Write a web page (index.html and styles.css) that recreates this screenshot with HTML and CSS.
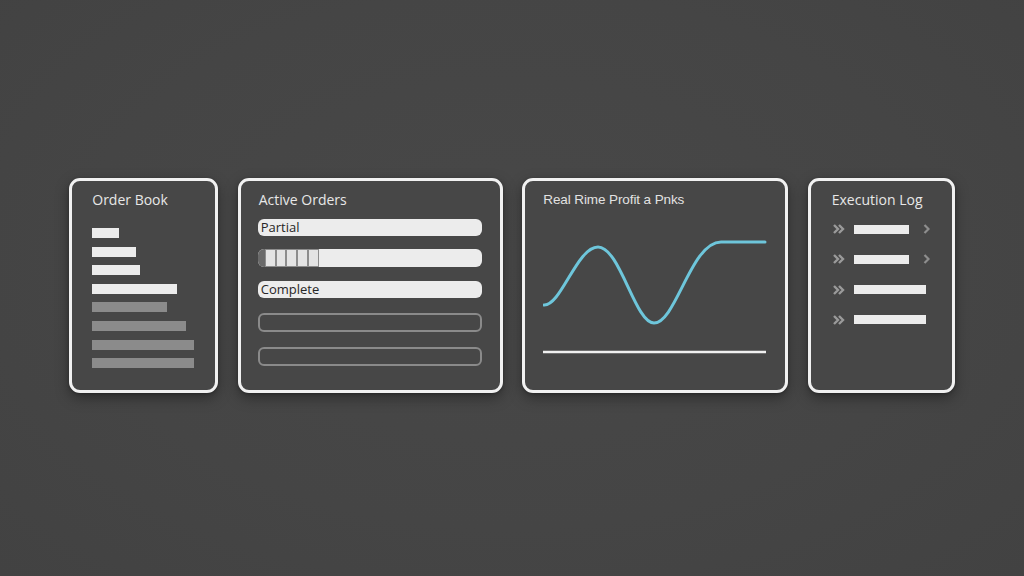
FILE: index.html
```html
<!DOCTYPE html>
<html lang="en">
<head>
<meta charset="utf-8">
<title>Trading Panels</title>
<link rel="stylesheet" href="styles.css">
</head>
<body>
<main class="stage">
  <section class="card card-book">
    <h2 class="title">Order Book</h2>
    <div class="bars">
      <div class="bar bar-light" style="width:27px"></div>
      <div class="bar bar-light" style="width:44px"></div>
      <div class="bar bar-light" style="width:48px"></div>
      <div class="bar bar-light" style="width:85px"></div>
      <div class="bar bar-gray" style="width:75px"></div>
      <div class="bar bar-gray" style="width:94px"></div>
      <div class="bar bar-gray" style="width:102px"></div>
      <div class="bar bar-gray" style="width:102px"></div>
    </div>
  </section>

  <section class="card card-orders">
    <h2 class="title">Active Orders</h2>
    <div class="rows">
      <div class="row row-fill">Partial</div>
      <div class="row row-progress">
        <span class="cap"></span>
        <span class="seg"></span><span class="seg"></span><span class="seg"></span><span class="seg"></span><span class="seg"></span>
      </div>
      <div class="row row-fill">Complete</div>
      <div class="row row-outline"></div>
      <div class="row row-outline"></div>
    </div>
  </section>

  <section class="card card-pnl">
    <h2 class="title title-pnl">Real Rime Profit a Pnks</h2>
    <svg class="chart" width="226" height="122" viewBox="0 0 226 122">
      <path d="M1 69 C 18 70, 34 11, 55 11 C 77 11, 92 87, 111 87 C 133 87, 148 6, 178 6 L 222 6" fill="none" stroke="#6ec6db" stroke-width="3" stroke-linecap="round"/>
      <line x1="0" y1="116" x2="223" y2="116" stroke="#f0f0f0" stroke-width="2.5"/>
    </svg>
  </section>

  <section class="card card-log">
    <h2 class="title">Execution Log</h2>
    <div class="log">
      <div class="log-row">
        <svg class="dchev" width="12" height="10" viewBox="0 0 12 10"><path d="M1 1 L5 5 L1 9 M6 1 L10 5 L6 9" fill="none" stroke="#9a9a9a" stroke-width="2.4"/></svg>
        <span class="log-bar" style="width:55px"></span>
        <svg class="schev" width="7" height="10" viewBox="0 0 7 10"><path d="M1.5 1 L5.5 5 L1.5 9" fill="none" stroke="#8e8e8e" stroke-width="2.2"/></svg>
      </div>
      <div class="log-row">
        <svg class="dchev" width="12" height="10" viewBox="0 0 12 10"><path d="M1 1 L5 5 L1 9 M6 1 L10 5 L6 9" fill="none" stroke="#9a9a9a" stroke-width="2.4"/></svg>
        <span class="log-bar" style="width:55px"></span>
        <svg class="schev" width="7" height="10" viewBox="0 0 7 10"><path d="M1.5 1 L5.5 5 L1.5 9" fill="none" stroke="#8e8e8e" stroke-width="2.2"/></svg>
      </div>
      <div class="log-row">
        <svg class="dchev" width="12" height="10" viewBox="0 0 12 10"><path d="M1 1 L5 5 L1 9 M6 1 L10 5 L6 9" fill="none" stroke="#9a9a9a" stroke-width="2.4"/></svg>
        <span class="log-bar" style="width:72px"></span>
      </div>
      <div class="log-row">
        <svg class="dchev" width="12" height="10" viewBox="0 0 12 10"><path d="M1 1 L5 5 L1 9 M6 1 L10 5 L6 9" fill="none" stroke="#9a9a9a" stroke-width="2.4"/></svg>
        <span class="log-bar" style="width:72px"></span>
      </div>
    </div>
  </section>
</main>
</body>
</html>
```

FILE: styles.css
```css
* { box-sizing: border-box; }

html, body {
  margin: 0;
  padding: 0;
}

body {
  width: 1024px;
  height: 576px;
  overflow: hidden;
  background: radial-gradient(ellipse at 50% 45%, #484848 0%, #454545 60%, #424242 100%);
  font-family: "Open Sans", "Liberation Sans", sans-serif;
}

.stage {
  height: 576px;
  display: flex;
  align-items: center;
  justify-content: center;
  gap: 19.5px;
  padding-bottom: 5px;
}

.card {
  height: 215px;
  border: 3px solid #f1f1f1;
  border-radius: 11px;
  background: #474747;
  box-shadow: 0 5px 14px rgba(0, 0, 0, 0.35), 0 1px 3px rgba(0, 0, 0, 0.25);
  padding: 9px 17px 0 20px;
}

.title {
  margin: 0;
  font-size: 14px;
  font-weight: 400;
  line-height: 19px;
  color: #e8e8e8;
  white-space: nowrap;
}

/* Order book */
.card-book { width: 149px; }

.bars {
  margin-top: 19px;
  display: flex;
  flex-direction: column;
  gap: 8.6px;
}

.bar { height: 10px; }
.bar-light { background: #ececec; }
.bar-gray { background: #8b8b8b; }

/* Active orders */
.card-orders {
  width: 265px;
  padding-left: 17px;
  padding-right: 18px;
}

.card-orders .title { padding-left: 1px; }

.rows {
  margin-top: 10px;
  display: flex;
  flex-direction: column;
}

.row {
  height: 17px;
  border-radius: 6px;
}

.row-fill {
  background: #ececec;
  color: #262626;
  font-size: 13px;
  line-height: 17px;
  padding-left: 3px;
}

.row-progress {
  margin-top: 13px;
  height: 18px;
  background: #ececec;
  display: flex;
  overflow: hidden;
}

.cap {
  width: 7px;
  background: #6a6a6a;
}

.seg {
  width: 10.8px;
  background: #e4e4e4;
  border: 1px solid #8d8d8d;
  border-left-width: 0.5px;
  border-right-width: 1.5px;
}

.row-progress + .row-fill { margin-top: 14px; }

.row-outline {
  height: 19px;
  background: transparent;
  border: 2px solid #8a8a8a;
}

.row-fill + .row-outline { margin-top: 15px; }
.row-outline + .row-outline { margin-top: 15px; }

/* PnL */
.card-pnl {
  width: 266px;
  padding-left: 18px;
}

.title-pnl {
  font-family: "Liberation Sans", Arial, sans-serif;
  font-size: 13.5px;
  color: #e2e2e2;
  letter-spacing: -0.1px;
}

.chart {
  display: block;
  margin-top: 27px;
  margin-left: 0;
}

/* Execution log */
.card-log {
  width: 147px;
  padding-left: 21px;
}

.log {
  margin-top: 15px;
  display: flex;
  flex-direction: column;
  gap: 20.3px;
}

.log-row {
  height: 10px;
  display: flex;
  align-items: center;
}

.dchev { display: block; flex: none; margin-left: 1px; }

.log-bar {
  display: block;
  height: 9px;
  background: #ececec;
  margin-left: 9px;
}

.schev { display: block; flex: none; margin-left: 14px; }
```
